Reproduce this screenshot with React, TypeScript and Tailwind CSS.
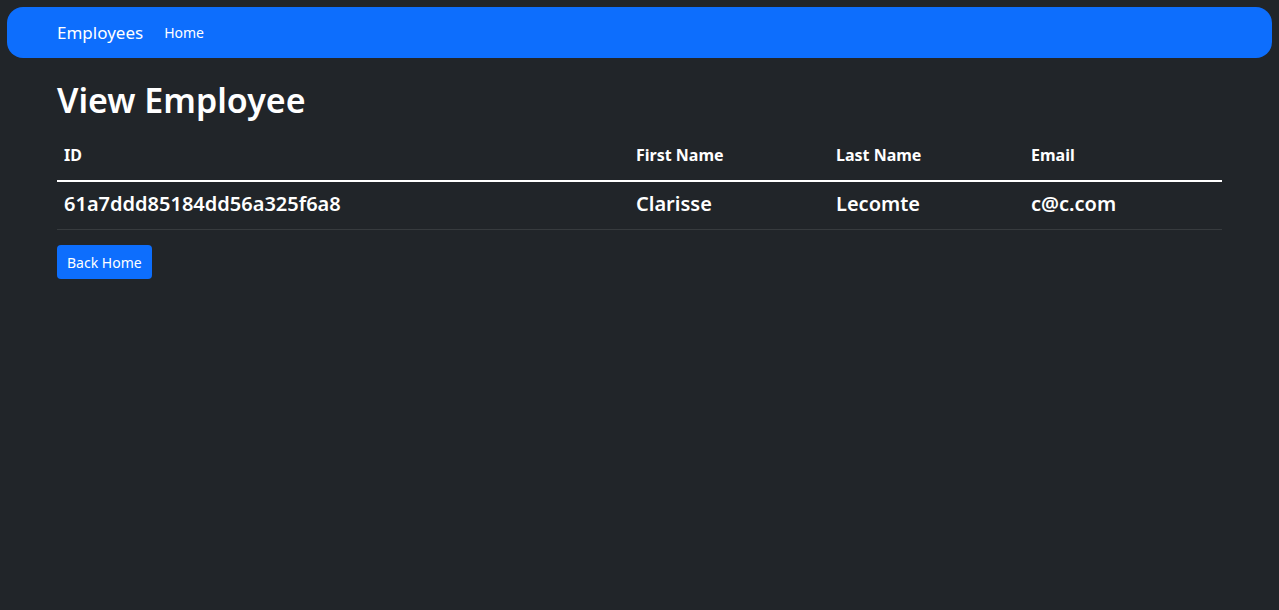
export default function App() {
  const headers = ["ID", "First Name", "Last Name", "Email"];
  const row = ["61a7ddd85184dd56a325f6a8", "Clarisse", "Lecomte", "c@c.com"];

  return (
    <div className="min-h-[610px] bg-[#212529] px-[7px] pt-[7px] text-white font-['Noto_Sans',sans-serif]">
      {/* navbar */}
      <nav className="flex h-[51px] items-center rounded-[16px] bg-[#0d6efd] px-[50px]">
        <span className="text-[17px] leading-none">Employees</span>
        <span className="ml-[21px] text-[14px] leading-none">Home</span>
      </nav>

      <main className="px-[50px]">
        <h1 className="mt-[18px] text-[34px] font-semibold leading-[48px]">View Employee</h1>

        <div className="mt-[8px] grid grid-cols-[572px_200px_195px_1fr]">
          {headers.map((h) => (
            <div
              key={h}
              className="flex h-[50px] items-center border-b-2 border-white px-[7px] pb-[2px] text-[16px] font-bold"
            >
              {h}
            </div>
          ))}
          {row.map((c) => (
            <div
              key={c}
              className="flex h-[48px] items-center border-b border-[#373b3e] px-[7px] pb-[4px] text-[20px] font-semibold"
            >
              {c}
            </div>
          ))}
        </div>

        <button className="mt-[15px] h-[34px] rounded-[4px] bg-[#0d6efd] px-[10px] text-[14px] text-white">
          Back Home
        </button>
      </main>
    </div>
  );
}
